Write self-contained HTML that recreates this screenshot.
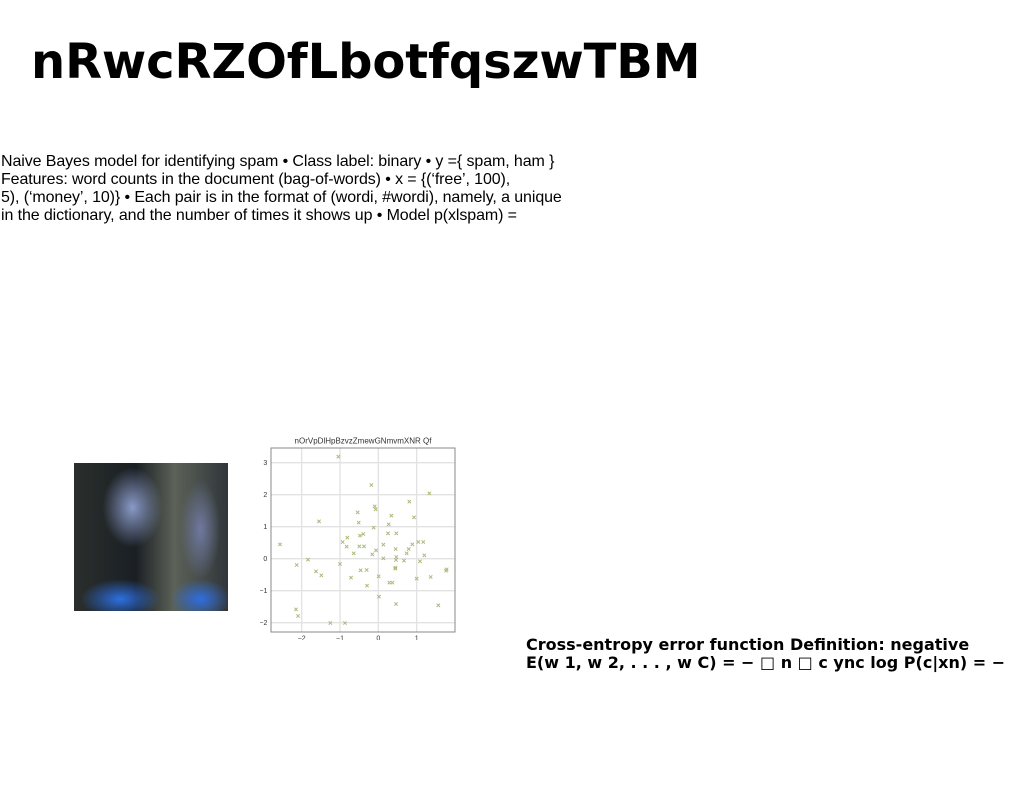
<!DOCTYPE html>
<html><head><meta charset="utf-8"><style>
body{margin:0;width:1024px;height:788px;background:#fff;position:relative;overflow:hidden}
.t{position:absolute;left:31px;top:34px;font:bold 48px "DejaVu Sans",sans-serif;color:#000;letter-spacing:-0.1px;white-space:nowrap}
.p{position:absolute;left:1px;top:153px;font:16px/18px "Liberation Sans",sans-serif;color:#000;letter-spacing:-0.1px;white-space:nowrap}
.b{position:absolute;left:526px;top:636px;font:bold 16px/18px "DejaVu Sans",sans-serif;color:#000;white-space:nowrap;letter-spacing:0}
.img{position:absolute;left:74px;top:463px;width:154px;height:148px;background:
radial-gradient(ellipse 30px 40px at 38% 30%,#8a9ac8,transparent),
radial-gradient(ellipse 40px 20px at 30% 92%,#2d6fe0,transparent),
radial-gradient(ellipse 30px 20px at 82% 92%,#2f6ee0,transparent),
radial-gradient(ellipse 20px 50px at 82% 45%,#6f79a0,transparent),
linear-gradient(90deg,#2a2f2c,#1a1f24 40%,#5c6258 65%,#30363a)}
</style></head><body>
<div class="t">nRwcRZOfLbotfqszwTBM</div>
<div class="p">Naive Bayes model for identifying spam • Class label: binary • y ={ spam, ham }<br>Features: word counts in the document (bag-of-words) • x = {(‘free’, 100),<br>5), (‘money’, 10)} • Each pair is in the format of (wordi, #wordi), namely, a unique<br>in the dictionary, and the number of times it shows up • Model p(xlspam) =</div>
<div class="img"></div>
<svg style="position:absolute;left:260px;top:430px" width="210" height="210" viewBox="0 0 630 630">
<g stroke="#e2e2e2" stroke-width="4">
<line x1="125" y1="54" x2="125" y2="606"/><line x1="240" y1="54" x2="240" y2="606"/><line x1="355" y1="54" x2="355" y2="606"/><line x1="470" y1="54" x2="470" y2="606"/>
<line x1="33" y1="98" x2="585" y2="98"/><line x1="33" y1="194" x2="585" y2="194"/><line x1="33" y1="290" x2="585" y2="290"/><line x1="33" y1="386" x2="585" y2="386"/><line x1="33" y1="482" x2="585" y2="482"/><line x1="33" y1="578" x2="585" y2="578"/>
</g>
<rect x="33" y="54" width="552" height="552" fill="none" stroke="#888" stroke-width="3"/>
<g font-family="Liberation Sans,sans-serif" font-size="21" fill="#333">
<text x="309" y="40" text-anchor="middle" font-size="24">nOrVpDlHpBzvzZmewGNmvmXNR Qf</text>
<text x="22" y="105" text-anchor="end">3</text><text x="22" y="201" text-anchor="end">2</text><text x="22" y="297" text-anchor="end">1</text><text x="22" y="393" text-anchor="end">0</text><text x="22" y="489" text-anchor="end">−1</text><text x="22" y="585" text-anchor="end">−2</text>
<text x="125" y="632" text-anchor="middle">−2</text><text x="240" y="632" text-anchor="middle">−1</text><text x="355" y="632" text-anchor="middle">0</text><text x="470" y="632" text-anchor="middle">1</text>
</g>
<g id="pts" stroke="#a9ba7a" stroke-width="3" fill="none"></g>
</svg>
<div class="b">Cross-entropy error function Definition: negative<br>E(w 1, w 2, . . . , w C) = − □ n □ c ync log P(c|xn) = −</div>
<script>
var p=[[60,343],[110,405],[144,389],[108,538],[114,558],[177,274],[168,424],[184,436],[211,579],[255,579],[235,80],[240,402],[248,336],[262,323],[260,350],[273,443],[281,370],[293,247],[296,278],[300,317],[298,349],[302,421],[310,312],[312,349],[320,420],[321,467],[334,165],[337,373],[341,293],[344,229],[347,238],[348,361],[356,439],[357,500],[370,344],[370,385],[384,310],[386,283],[388,458],[394,257],[397,458],[407,357],[408,390],[409,310],[409,381],[406,413],[406,416],[408,522],[432,392],[440,370],[446,357],[448,215],[457,343],[462,262],[470,446],[475,336],[480,394],[490,336],[493,376],[508,190],[512,441],[535,526],[558,422],[560,418]];
var s='';p.forEach(function(a){var x=a[0],y=a[1];s+='<path d="M'+(x-5)+' '+(y-5)+'L'+(x+5)+' '+(y+5)+'M'+(x-5)+' '+(y+5)+'L'+(x+5)+' '+(y-5)+'"/>';});
document.getElementById('pts').innerHTML=s;
</script>
</body></html>
